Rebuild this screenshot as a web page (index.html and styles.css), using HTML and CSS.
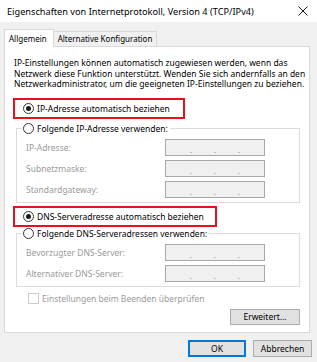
FILE: index.html
```html
<!DOCTYPE html>
<html lang="de">
<head>
<meta charset="UTF-8">
<meta name="viewport" content="width=device-width, initial-scale=1.0">
<title>Eigenschaften von Internetprotokoll, Version 4 (TCP/IPv4)</title>
<link rel="stylesheet" href="styles.css">
</head>
<body>
<div class="window">
    <div class="titlebar">
        <span class="title">Eigenschaften von Internetprotokoll, Version 4 (TCP/IPv4)</span>
        <svg class="close" width="10" height="10" viewBox="0 0 10 10">
            <path d="M0.5 0.5 L9.5 9.5 M9.5 0.5 L0.5 9.5" stroke="#000" stroke-width="0.9" fill="none"/>
        </svg>
    </div>

    <div class="tabs">
        <div class="tab active">Allgemein</div>
        <div class="tab">Alternative Konfiguration</div>
    </div>

    <div class="panel">
        <p class="intro">IP-Einstellungen können automatisch zugewiesen werden, wenn das<br>Netzwerk diese Funktion unterstützt. Wenden Sie sich andernfalls an den<br>Netzwerkadministrator, um die geeigneten IP-Einstellungen zu beziehen.</p>

        <div class="marked marked-ip">
            <div class="choice"><span class="radio checked"></span>IP-Adresse automatisch beziehen</div>
        </div>

        <fieldset class="group group-ip">
            <legend class="choice"><span class="radio"></span>Folgende IP-Adresse verwenden:</legend>
            <div class="field"><span class="label">IP-Adresse:</span><span class="ip"><i>.</i><i>.</i><i>.</i></span></div>
            <div class="field"><span class="label">Subnetzmaske:</span><span class="ip"><i>.</i><i>.</i><i>.</i></span></div>
            <div class="field"><span class="label">Standardgateway:</span><span class="ip"><i>.</i><i>.</i><i>.</i></span></div>
        </fieldset>

        <div class="marked marked-dns">
            <div class="choice"><span class="radio checked"></span>DNS-Serveradresse automatisch beziehen</div>
        </div>

        <fieldset class="group">
            <legend class="choice"><span class="radio"></span>Folgende DNS-Serveradressen verwenden:</legend>
            <div class="field"><span class="label">Bevorzugter DNS-Server:</span><span class="ip"><i>.</i><i>.</i><i>.</i></span></div>
            <div class="field"><span class="label">Alternativer DNS-Server:</span><span class="ip"><i>.</i><i>.</i><i>.</i></span></div>
        </fieldset>

        <div class="check"><span class="box"></span>Einstellungen beim Beenden überprüfen</div>

        <div class="panel-actions">
            <button class="btn btn-more">Erweitert...</button>
        </div>
    </div>

    <div class="actions">
        <button class="btn btn-ok">OK</button>
        <button class="btn btn-cancel">Abbrechen</button>
    </div>
</div>
</body>
</html>
```

FILE: styles.css
```css
:root {
    --window-bg: #f0f0f0;
    --panel-border: #d9d9d9;
    --group-border: #dcdcdc;
    --disabled-text: #9a9a9a;
    --annotation: #e8101e;
}
body {
    margin: 0;
    font-family: 'Noto Sans', sans-serif;
    font-size: 8.5px;
    color: #000;
    background: var(--window-bg);
}
.window {
    width: 317px;
    height: 362px;
    overflow: hidden;
    background: var(--window-bg);
}
.titlebar {
    height: 22px;
    background: #fff;
    display: flex;
    align-items: center;
    justify-content: space-between;
    padding: 0 9px 0 7px;
    font-size: 9.2px;
}
.close {
    display: block;
}
.tabs {
    display: flex;
    align-items: flex-end;
    padding: 7px 0 0 4px;
    margin-bottom: -1px;
    position: relative;
    z-index: 1;
    font-size: 8px;
}
.tab {
    height: 14px;
    line-height: 14px;
    padding: 0 4px;
    border: 1px solid var(--panel-border);
    border-bottom: none;
    margin-bottom: 1px;
    margin-left: -1px;
    white-space: nowrap;
}
.tab.active {
    height: 17px;
    line-height: 17px;
    background: #fff;
    margin-bottom: 0;
    margin-left: 0;
    padding: 0 6px 0 4px;
}
.panel {
    width: 306px;
    box-sizing: border-box;
    margin-left: 4px;
    background: #fff;
    border: 1px solid var(--panel-border);
    padding: 11px 9px 7px 9px;
}
.intro {
    margin: 0;
    line-height: 10.5px;
    white-space: nowrap;
}
.marked {
    border: 2px solid var(--annotation);
    height: 17px;
    margin-left: -1px;
    padding-left: 8px;
}
.marked-ip {
    width: 160px;
    margin-top: 8px;
}
.marked-dns {
    width: 192px;
    margin-top: 3px;
}
.choice {
    display: flex;
    align-items: center;
    height: 17px;
    gap: 3px;
    white-space: nowrap;
}
.radio {
    width: 9px;
    height: 9px;
    border: 1px solid #333;
    border-radius: 50%;
    display: flex;
    align-items: center;
    justify-content: center;
    background: #fff;
}
.radio.checked::after {
    content: "";
    width: 5px;
    height: 5px;
    border-radius: 50%;
    background: #1a1a1a;
}
.group {
    margin: 0 0 0 2px;
    border: 1px solid var(--group-border);
    padding: 0 0 4px 9px;
    min-width: 0;
}
.group-ip {
    margin-top: 3px;
}
.group legend {
    height: 13px;
    padding: 0 2px 0 1px;
    margin-left: -4px;
}
.field {
    display: flex;
    align-items: center;
    height: 17px;
    margin-top: 4px;
}
.label {
    width: 139px;
    color: var(--disabled-text);
}
.ip {
    width: 100px;
    height: 17px;
    box-sizing: border-box;
    border: 1px solid #a8a8a8;
    background: var(--window-bg);
    display: flex;
    justify-content: center;
    gap: 21px;
    line-height: 19px;
    color: #8a8a8a;
}
.ip i {
    font-style: normal;
    width: 3px;
    text-align: center;
}
.check {
    display: flex;
    align-items: center;
    gap: 3px;
    height: 13px;
    margin: 5px 0 0 14px;
    color: var(--disabled-text);
}
.box {
    width: 9px;
    height: 9px;
    border: 1px solid #cccccc;
    background: #fff;
}
.panel-actions {
    display: flex;
    justify-content: flex-end;
    margin-top: 4px;
}
.btn {
    font-family: inherit;
    font-size: 8.5px;
    height: 16px;
    padding: 0;
    background: #e1e1e1;
    border: 1px solid #adadad;
    color: #000;
}
.btn-more {
    width: 70px;
}
.actions {
    display: flex;
    justify-content: flex-end;
    gap: 7px;
    margin-top: 7px;
    padding-right: 5px;
}
.btn-ok {
    width: 58px;
    height: 17px;
    border: 1px solid #0078d7;
    box-shadow: inset 0 0 0 1px #0078d7;
}
.btn-cancel {
    width: 59px;
    height: 17px;
}
```
